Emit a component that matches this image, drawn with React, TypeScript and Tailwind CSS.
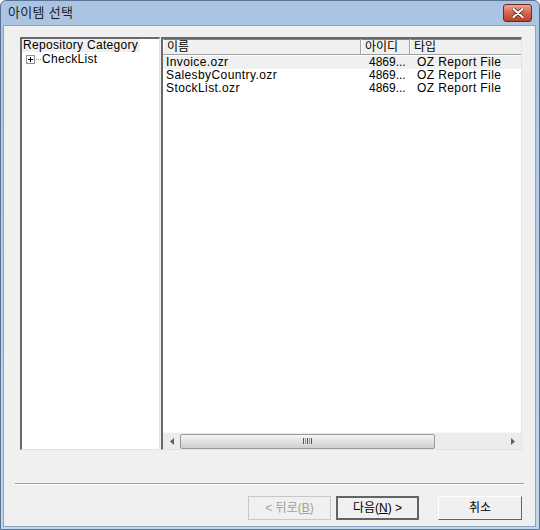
import React from "react";

const rows = [
  { name: "Invoice.ozr", id: "4869...", type: "OZ Report File", sel: true },
  { name: "SalesbyCountry.ozr", id: "4869...", type: "OZ Report File", sel: false },
  { name: "StockList.ozr", id: "4869...", type: "OZ Report File", sel: false },
];

const font = { fontFamily: '"Liberation Sans", "Noto Sans CJK KR", sans-serif' };

const HeaderCell = ({ label, w }: { label: string; w: string }) => (
  <div
    className={`${w} h-full shrink-0 border-r border-r-[#a0a0a0] border-t border-t-[#808080] border-l border-l-white bg-[#f0f0f0] px-[3px] leading-[14px]`}
  >
    {label}
  </div>
);

const App = () => {
  return (
    <div
      className="w-[540px] h-[530px] flex flex-col rounded-t-[6px] border border-[#5a7394] bg-gradient-to-b from-[#a9c4e2] to-[#c3d7ec] text-[12px] text-black"
      style={font}
    >
      {/* title bar */}
      <div className="h-[24px] flex items-center justify-between pl-[7px] pr-[7px] shrink-0">
        <span className="text-[13px] text-[#1e1e1e] tracking-[0.3px]">아이템 선택</span>
        <div className="w-[29px] h-[18px] rounded-[3px] border border-[#6e2a20] bg-gradient-to-b from-[#eaa596] via-[#d5654e] to-[#b9412b] flex items-center justify-center">
          <svg width="12" height="10" viewBox="0 0 12 10">
            <path d="M1.5 1 L10.5 9 M10.5 1 L1.5 9" stroke="#5a2018" strokeWidth="3.6" strokeLinecap="round" />
            <path d="M1.5 1 L10.5 9 M10.5 1 L1.5 9" stroke="white" strokeWidth="2.2" strokeLinecap="round" />
          </svg>
        </div>
      </div>

      {/* client */}
      <div className="flex-1 ml-[2px] mr-[3px] mb-[2px] bg-[#f0f0f0] border border-[#8aa4c2] flex flex-col">
        <div className="flex pl-[16px] pt-[11px] h-[424px] shrink-0">
          {/* left tree */}
          <div className="w-[140px] h-[413px] bg-white border-t-2 border-l-2 border-t-[#696969] border-l-[#696969] border-r border-b border-r-[#e3e3e3] border-b-[#e3e3e3] flex flex-col">
            <div className="h-[13px] leading-[13px] pl-[1px] pr-[2px] bg-[#f0f0f0] self-start whitespace-nowrap tracking-[0.3px]">
              Repository Category
            </div>
            <div className="flex items-center h-[14px] pl-[4px]">
              <div className="w-[9px] h-[9px] border border-[#919191] bg-white flex items-center justify-center relative">
                <span className="absolute w-[5px] h-[1px] bg-black" />
                <span className="absolute w-[1px] h-[5px] bg-black" />
              </div>
              <div className="w-[5px] border-t border-dotted border-[#a0a0a0] ml-[1px]" />
              <span className="ml-[1px] leading-[13px] tracking-[0.3px]">CheckList</span>
            </div>
          </div>

          {/* right list */}
          <div className="ml-[1px] w-[361px] h-[413px] bg-white border-t-2 border-l-2 border-t-[#696969] border-l-[#696969] border-r border-b border-r-[#e3e3e3] border-b-[#e3e3e3] flex flex-col">
            <div className="flex h-[16px] shrink-0 bg-[#f0f0f0] border-b border-b-[#a0a0a0]">
              <HeaderCell label="이름" w="w-[198px]" />
              <HeaderCell label="아이디" w="w-[49px]" />
              <div className="flex-1 h-full border-t border-t-[#808080] border-l border-l-white px-[3px] leading-[14px]">
                타입
              </div>
            </div>
            <div className="flex-1 pt-[1px]">
              {rows.map((r) => (
                <div
                  key={r.name}
                  className={`flex h-[13px] leading-[13px] tracking-[0.4px] ${r.sel ? "bg-[#f0f0f0]" : ""}`}
                >
                  <span className="w-[199px] pl-[3px] shrink-0">{r.name}</span>
                  <span className="w-[50px] pl-[7px] shrink-0 tracking-normal">{r.id}</span>
                  <span className="pl-[5px] pr-[3px]">{r.type}</span>
                </div>
              ))}
            </div>
            {/* horizontal scrollbar */}
            <div className="h-[17px] shrink-0 flex items-center bg-[#ececec] border-t border-t-[#f8f8f8]">
              <div className="w-[17px] flex items-center justify-center">
                <svg width="4" height="7" viewBox="0 0 4 7">
                  <path d="M4 0 L0 3.5 L4 7 Z" fill="#606060" />
                </svg>
              </div>
              <div className="w-[255px] h-[15px] rounded-[2px] border border-[#989898] bg-gradient-to-b from-[#f4f4f4] via-[#e2e2e2] to-[#cfcfcf] flex items-center justify-center gap-[1px]">
                <span className="w-[1px] h-[6px] bg-[#555]" />
                <span className="w-[1px] h-[6px] bg-[#999]" />
                <span className="w-[1px] h-[6px] bg-[#555]" />
                <span className="w-[1px] h-[6px] bg-[#999]" />
                <span className="w-[1px] h-[6px] bg-[#555]" />
              </div>
              <div className="flex-1" />
              <div className="w-[16px] flex items-center justify-center">
                <svg width="4" height="7" viewBox="0 0 4 7">
                  <path d="M0 0 L4 3.5 L0 7 Z" fill="#606060" />
                </svg>
              </div>
            </div>
          </div>
        </div>

        {/* separator */}
        <div className="mt-[33px] mx-[11px] border-t border-t-[#a0a0a0] border-b border-b-white" />

        {/* buttons */}
        <div className="flex justify-end pr-[13px] mt-[11px]">
          <button className="w-[83px] h-[24px] border border-[#c8c8c8] bg-[#f0f0f0] text-[#a0a0a0] leading-[22px]">
            &lt; 뒤로(<span className="underline">B</span>)
          </button>
          <button className="ml-[5px] w-[83px] h-[24px] border-2 border-[#646464] bg-[#f0f0f0] leading-[20px]">
            다음(<span className="underline">N</span>) &gt;
          </button>
          <button className="ml-[19px] w-[84px] h-[24px] border border-t-white border-l-white border-r-[#646464] border-b-[#646464] bg-[#f0f0f0] leading-[22px]">
            취소
          </button>
        </div>
      </div>
    </div>
  );
};

export default App;
